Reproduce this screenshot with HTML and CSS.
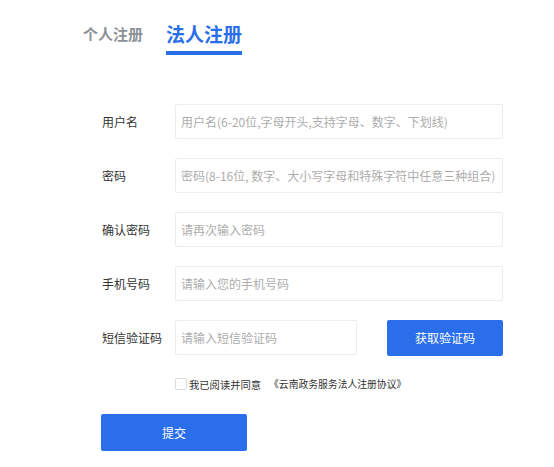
FILE: index.html
```html
<!DOCTYPE html>
<html lang="zh-CN">
<head>
    <meta charset="UTF-8">
    <meta name="viewport" content="width=device-width, initial-scale=1.0">
    <title>法人注册</title>
    <link rel="stylesheet" href="styles.css">
</head>
<body>

    <div class="page">
        <!-- 切换个人/法人 -->
        <div class="tabs">
            <span class="tab">个人注册</span>
            <span class="tab active">法人注册</span>
        </div>

        <form class="form" onsubmit="return false">
            <div class="row">
                <label>用户名</label>
                <input type="text" placeholder="用户名(6-20位,字母开头,支持字母、数字、下划线)">
            </div>
            <div class="row">
                <label>密码</label>
                <input type="password" placeholder="密码(8-16位, 数字、大小写字母和特殊字符中任意三种组合)">
            </div>
            <div class="row">
                <label>确认密码</label>
                <input type="password" placeholder="请再次输入密码">
            </div>
            <div class="row">
                <label>手机号码</label>
                <input type="text" placeholder="请输入您的手机号码">
            </div>
            <div class="row">
                <label>短信验证码</label>
                <input type="text" class="short" placeholder="请输入短信验证码">
                <button type="button" class="code-btn">获取验证码</button>
            </div>

            <div class="agree">
                <input type="checkbox" id="agree">
                <label for="agree">我已阅读并同意</label>
                <a href="#" class="protocol">《云南政务服务法人注册协议》</a>
            </div>

            <button type="submit" class="submit">提交</button>
        </form>
    </div>

</body>
</html>
```

FILE: styles.css
```css
    body, html {
        margin: 0;
        padding: 0;
        background-color: #fff;
        font-family: "Noto Sans CJK SC", "Noto Sans", sans-serif;
        color: #333;
    }

    .page {
        padding: 22px 0 0 83px;
    }

    .tabs {
        display: flex;
        gap: 23px;
    }

    .tab {
        font-size: 15px;
        font-weight: bold;
        color: #8d9196;
        line-height: 24px;
        padding-bottom: 5px;
        border-bottom: 4px solid transparent;
    }

    .tab.active {
        font-size: 19px;
        color: #2a6ee9;
        border-bottom-color: #2a6ee9;
    }

    .form {
        margin-top: 49px;
        padding-left: 19px;
    }

    .row {
        display: flex;
        align-items: center;
        height: 35px;
        margin-bottom: 19px;
    }

    .row label {
        width: 73px;
        font-size: 12px;
        color: #333;
    }

    .row input {
        box-sizing: border-box;
        width: 328px;
        height: 35px;
        border: 1px solid #ececec;
        border-radius: 2px;
        padding: 0 5px;
        font-family: inherit;
        font-size: 12px;
        color: #333;
        outline: none;
    }

    .row input::placeholder {
        color: #adadad;
    }

    .row input.short {
        width: 182px;
    }

    .code-btn {
        margin-left: 30px;
        width: 116px;
        height: 36px;
        border: none;
        border-radius: 2px;
        background-color: #2a6ee9;
        color: #fff;
        font-family: inherit;
        font-size: 12px;
        cursor: pointer;
    }

    .agree {
        display: flex;
        align-items: center;
        height: 20px;
        padding-left: 73px;
        font-size: 10.3px;
        color: #333;
    }

    .agree input {
        appearance: none;
        margin: 0 2px 0 0;
        width: 12px;
        height: 12px;
        border: 1px solid #dcdcdc;
        border-radius: 2px;
        background: #fff;
    }

    .protocol {
        margin-left: 8px;
        font-size: 9.8px;
        color: #333;
        text-decoration: none;
    }

    .submit {
        margin-top: 20px;
        margin-left: -1px;
        width: 146px;
        height: 37px;
        border: none;
        border-radius: 2px;
        background-color: #2a6ee9;
        color: #fff;
        font-family: inherit;
        font-size: 12px;
        cursor: pointer;
    }
```
